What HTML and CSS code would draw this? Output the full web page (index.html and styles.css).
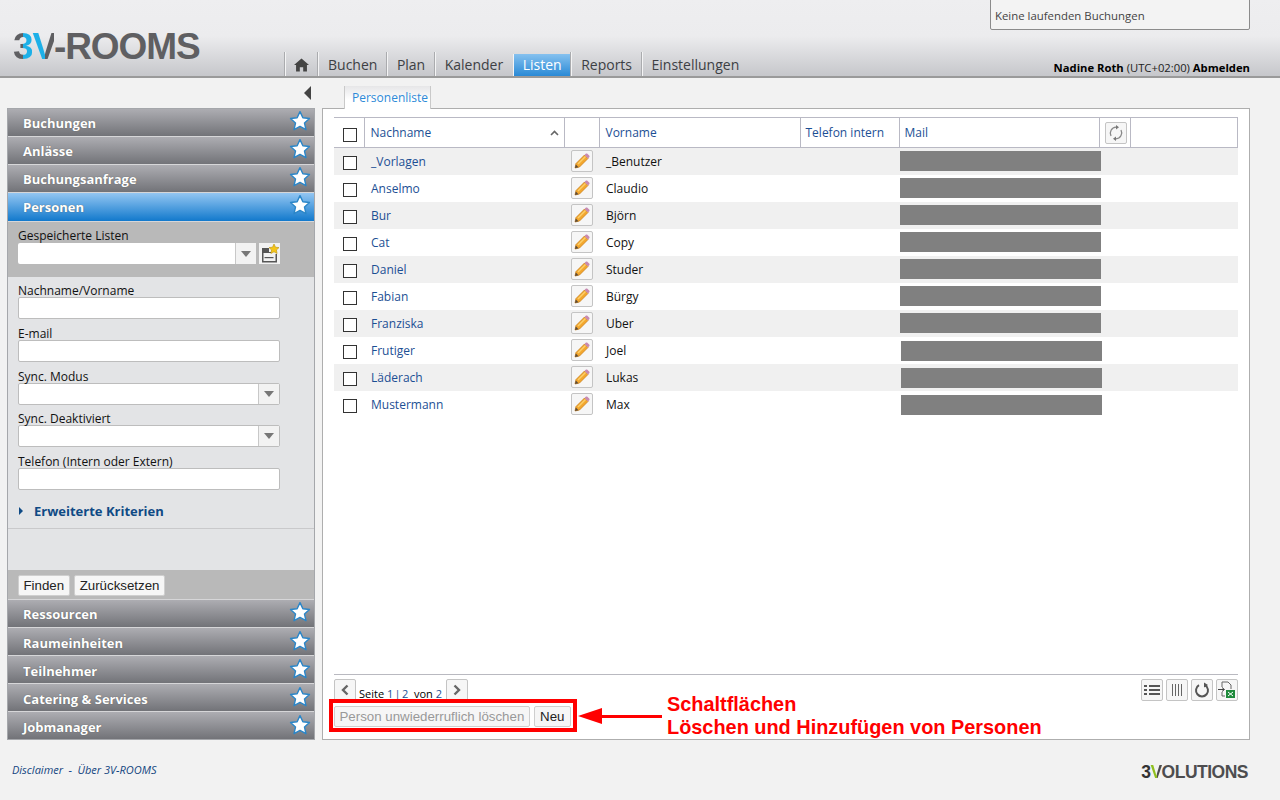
FILE: index.html
```html
<!DOCTYPE html>
<html lang="de">

<head>
    <meta charset="UTF-8">
    <title>3V-ROOMS Personenliste</title>
    <link rel="stylesheet" href="styles.css">
</head>

<body>
    <svg class="defs" width="0" height="0">
        <symbol id="star" viewBox="0 0 20 20">
            <path d="M10 1.500l2.600 5.600 6 .7-4.500 4.100 1.300 6L10 14.900l-5.400 3 1.300-6L1.400 7.800l6-.7z" fill="#fff" stroke="#2b86c8" stroke-width="1.300" stroke-linejoin="round"/>
        </symbol>
        <symbol id="pencil" viewBox="0 0 18 18">
            <path d="M3 11.500L11.500 3 15 6.500 6.500 15 2 16z" fill="#f3a72e" stroke="#c77a10" stroke-width=".7"/>
            <path d="M4.500 11.500L12 4l1 1-7.500 7.500z" fill="#fbcf6a"/>
            <path d="M11.500 3l1.200-1.200c.5-.5 1.200-.5 1.700 0l1.800 1.800c.5.5.5 1.200 0 1.700L15 6.500z" fill="#c88ab0"/>
            <path d="M2 16l.8-3.500 2.700 2.700z" fill="#5a4a3a"/>
        </symbol>
        <symbol id="caret" viewBox="0 0 10 6">
            <path d="M0 0h10L5 6z" fill="#777"/>
        </symbol>
    </svg>

    <!-- Header -->
    <header class="topbar">
        <div class="running-box">Keine laufenden Buchungen</div>
        <div class="logo"><span class="logo-3">3</span><span class="logo-v">V</span>-ROOMS</div>
        <nav class="nav">
            <a class="nav-home" href="#">
                <svg width="15" height="14" viewBox="0 0 16 14"><path d="M8 0L0 7h2.200v7h4v-4.500h3.600V14h4V7H16z" fill="#444"/></svg>
            </a>
            <a href="#">Buchen</a>
            <a href="#">Plan</a>
            <a href="#">Kalender</a>
            <a class="active" href="#">Listen</a>
            <a href="#">Reports</a>
            <a href="#">Einstellungen</a>
        </nav>
        <div class="user"><b>Nadine Roth</b> (UTC+02:00) <b>Abmelden</b></div>
    </header>

    <div class="main">
        <!-- Sidebar -->
        <aside class="side">
            <div class="collapse-row"><span class="collapse-arrow"></span></div>
            <div class="accordion">
                <div class="acc-head">Buchungen<svg class="star"><use href="#star"/></svg></div>
                <div class="acc-head">Anlässe<svg class="star"><use href="#star"/></svg></div>
                <div class="acc-head">Buchungsanfrage<svg class="star"><use href="#star"/></svg></div>
                <div class="acc-head acc-open">Personen<svg class="star"><use href="#star"/></svg></div>

                <div class="saved">
                    <label>Gespeicherte Listen</label>
                    <div class="saved-row">
                        <div class="combo combo-saved"><span class="combo-input"></span><span class="combo-btn"><svg width="10" height="6"><use href="#caret"/></svg></span></div>
                        <span class="save-btn">
                            <svg width="21" height="21" viewBox="0 0 21 21">
                                <path d="M3 5h7v4h2v1H3zM3 10h1.500v8H3zM16.500 11H18v8.500H3V18h13.500z" fill="#555"/>
                                <path d="M5.500 14h9v1.200h-9z" fill="#555"/>
                                <path d="M15 1l1.500 3.200 3.500.4-2.600 2.400.7 3.500L15 8.800l-3.100 1.700.7-3.500L10 4.600l3.500-.4z" fill="#f5c518" stroke="#b8900c" stroke-width=".6"/>
                            </svg>
                        </span>
                    </div>
                </div>

                <div class="filters">
                    <div class="field">
                        <label>Nachname/Vorname</label>
                        <input type="text">
                    </div>
                    <div class="field">
                        <label>E-mail</label>
                        <input type="text">
                    </div>
                    <div class="field">
                        <label>Sync. Modus</label>
                        <div class="combo"><span class="combo-input"></span><span class="combo-btn"><svg width="10" height="6"><use href="#caret"/></svg></span></div>
                    </div>
                    <div class="field">
                        <label>Sync. Deaktiviert</label>
                        <div class="combo"><span class="combo-input"></span><span class="combo-btn"><svg width="10" height="6"><use href="#caret"/></svg></span></div>
                    </div>
                    <div class="field">
                        <label>Telefon (Intern oder Extern)</label>
                        <input type="text">
                    </div>
                    <div class="more"><span class="more-arrow"></span>Erweiterte Kriterien</div>
                </div>
                <div class="filters-gap"></div>
                <div class="find-bar">
                    <button class="btn">Finden</button>
                    <button class="btn">Zurücksetzen</button>
                </div>

                <div class="acc-head">Ressourcen<svg class="star"><use href="#star"/></svg></div>
                <div class="acc-head">Raumeinheiten<svg class="star"><use href="#star"/></svg></div>
                <div class="acc-head">Teilnehmer<svg class="star"><use href="#star"/></svg></div>
                <div class="acc-head">Catering &amp; Services<svg class="star"><use href="#star"/></svg></div>
                <div class="acc-head">Jobmanager<svg class="star"><use href="#star"/></svg></div>
            </div>
        </aside>

        <!-- Content -->
        <section class="content">
            <div class="tabs"><span class="tab">Personenliste</span></div>
            <div class="panel">
                <div class="grid-area">
                    <table class="grid">
                        <colgroup>
                            <col class="c-check"><col class="c-name"><col class="c-edit"><col class="c-first"><col class="c-phone"><col class="c-mail"><col class="c-refresh"><col>
                        </colgroup>
                        <thead>
                            <tr>
                                <th><span class="check"></span></th>
                                <th><div class="th-sort">Nachname<svg width="9" height="6" viewBox="0 0 9 6"><path d="M1 5l3.500-3.500L8 5" fill="none" stroke="#666" stroke-width="1.600"/></svg></div></th>
                                <th></th>
                                <th>Vorname</th>
                                <th>Telefon intern</th>
                                <th>Mail</th>
                                <th>
                                    <span class="icon-btn">
                                        <svg width="16" height="16" viewBox="0 0 16 16"><path d="M3 11A6 6 0 0 1 8 2.200M13 5a6 6 0 0 1-5 8.800" fill="none" stroke="#888" stroke-width="1.300"/><path d="M8 0l3 2.200-3 2.200zM8 11.600l-3 2.200 3 2.200z" fill="#777"/></svg>
                                    </span>
                                </th>
                                <th></th>
                            </tr>
                        </thead>
                        <tbody>
                            <tr><td><span class="check"></span></td><td><a href="#">_Vorlagen</a></td><td><span class="icon-btn"><svg width="18" height="18"><use href="#pencil"/></svg></span></td><td>_Benutzer</td><td></td><td><span class="redacted"></span></td><td></td><td></td></tr>
                            <tr><td><span class="check"></span></td><td><a href="#">Anselmo</a></td><td><span class="icon-btn"><svg width="18" height="18"><use href="#pencil"/></svg></span></td><td>Claudio</td><td></td><td><span class="redacted"></span></td><td></td><td></td></tr>
                            <tr><td><span class="check"></span></td><td><a href="#">Bur</a></td><td><span class="icon-btn"><svg width="18" height="18"><use href="#pencil"/></svg></span></td><td>Björn</td><td></td><td><span class="redacted"></span></td><td></td><td></td></tr>
                            <tr><td><span class="check"></span></td><td><a href="#">Cat</a></td><td><span class="icon-btn"><svg width="18" height="18"><use href="#pencil"/></svg></span></td><td>Copy</td><td></td><td><span class="redacted"></span></td><td></td><td></td></tr>
                            <tr><td><span class="check"></span></td><td><a href="#">Daniel</a></td><td><span class="icon-btn"><svg width="18" height="18"><use href="#pencil"/></svg></span></td><td>Studer</td><td></td><td><span class="redacted"></span></td><td></td><td></td></tr>
                            <tr><td><span class="check"></span></td><td><a href="#">Fabian</a></td><td><span class="icon-btn"><svg width="18" height="18"><use href="#pencil"/></svg></span></td><td>Bürgy</td><td></td><td><span class="redacted"></span></td><td></td><td></td></tr>
                            <tr><td><span class="check"></span></td><td><a href="#">Franziska</a></td><td><span class="icon-btn"><svg width="18" height="18"><use href="#pencil"/></svg></span></td><td>Uber</td><td></td><td><span class="redacted"></span></td><td></td><td></td></tr>
                            <tr><td><span class="check"></span></td><td><a href="#">Frutiger</a></td><td><span class="icon-btn"><svg width="18" height="18"><use href="#pencil"/></svg></span></td><td>Joel</td><td></td><td><span class="redacted shifted"></span></td><td></td><td></td></tr>
                            <tr><td><span class="check"></span></td><td><a href="#">Läderach</a></td><td><span class="icon-btn"><svg width="18" height="18"><use href="#pencil"/></svg></span></td><td>Lukas</td><td></td><td><span class="redacted shifted"></span></td><td></td><td></td></tr>
                            <tr><td><span class="check"></span></td><td><a href="#">Mustermann</a></td><td><span class="icon-btn"><svg width="18" height="18"><use href="#pencil"/></svg></span></td><td>Max</td><td></td><td><span class="redacted shifted"></span></td><td></td><td></td></tr>
                        </tbody>
                    </table>
                </div>

                <div class="pager-row">
                    <div class="pager">
                        <span class="icon-btn"><svg width="10" height="12" viewBox="0 0 10 12"><path d="M7.500 1.500L3 6l4.500 4.500" fill="none" stroke="#666" stroke-width="2.400"/></svg></span>
                        <span class="pager-text">Seite <a class="pager-pages" href="#">1 | 2</a>&nbsp; von <a href="#">2</a></span>
                        <span class="icon-btn"><svg width="10" height="12" viewBox="0 0 10 12"><path d="M2.500 1.500L7 6l-4.500 4.500" fill="none" stroke="#666" stroke-width="2.400"/></svg></span>
                    </div>
                    <div class="tools">
                        <span class="icon-btn">
                            <svg width="16" height="12" viewBox="0 0 16 12"><path d="M0 1h3v2H0zM5 1h11v2H5zM0 5h3v2H0zM5 5h11v2H5zM0 9h3v2H0zM5 9h11v2H5z" fill="#555"/></svg>
                        </span>
                        <span class="icon-btn">
                            <svg width="12" height="12" viewBox="0 0 12 12"><path d="M1 0h1v12H1zM4 0h1v12H4zM7 0h1v12H7zM10 0h1v12h-1z" fill="#666"/></svg>
                        </span>
                        <span class="icon-btn">
                            <svg width="16" height="16" viewBox="0 0 16 16"><path d="M5 3.200a6 6 0 1 0 6 0" fill="none" stroke="#555" stroke-width="2"/><path d="M10 .5v5l4-2.500z" fill="#555"/></svg>
                        </span>
                        <span class="icon-btn">
                            <svg width="18" height="18" viewBox="0 0 18 18">
                                <path d="M4 6V1h6l3 3v4M4 11v4h3" fill="none" stroke="#666" stroke-width="1"/>
                                <path d="M0 8.500h6M4 6.500l2.500 2-2.500 2" fill="none" stroke="#444" stroke-width="1"/>
                                <rect x="8" y="9" width="9" height="8" fill="#1f8a3c"/>
                                <path d="M10 11l5 4M15 11l-5 4" stroke="#fff" stroke-width="1"/>
                            </svg>
                        </span>
                    </div>
                </div>
                <div class="actions">
                    <button class="btn btn-disabled">Person unwiederruflich löschen</button>
                    <button class="btn btn-new">Neu</button>
                </div>
            </div>

            <!-- Annotation over the page -->
            <div class="mark-box"></div>
            <div class="mark-arrow"><span class="mark-head"></span><span class="mark-line"></span></div>
            <div class="mark-text">Schaltflächen<br>Löschen und Hinzufügen von Personen</div>
        </section>
    </div>

    <footer class="foot">
        <div class="foot-links"><a href="#">Disclaimer</a><span class="foot-sep">-</span><a href="#">Über 3V-ROOMS</a></div>
        <div class="foot-logo"><span class="foot-3">3</span><span class="foot-v">V</span>OLUTIONS</div>
    </footer>
</body>

</html>
```

FILE: styles.css
```css
* {
    box-sizing: border-box;
}

html, body {
    height: 800px;
    overflow: hidden;
}

body {
    margin: 0;
    background-color: #f2f2f2;
    font-family: "Open Sans", "Noto Sans", sans-serif;
    font-size: 12px;
    color: #111;
}

a {
    color: #1c4f94;
    text-decoration: none;
}

.defs {
    position: absolute;
}

/* Header */
.topbar {
    height: 78px;
    display: flex;
    flex-direction: column;
    position: relative;
    background: linear-gradient(#eeeef0 0, #ececee 36px, #c5c6ca 77px);
    border-bottom: 2px solid #9a9a9a;
}

.running-box {
    position: absolute;
    left: 990px;
    top: -2px;
    width: 260px;
    height: 32px;
    padding: 8px 4px 0;
    background-color: #f3f3f3;
    border: 1px solid #8b8b8b;
    border-radius: 2px;
    color: #444;
    font-size: 11.400px;
    line-height: 18px;
}

.logo {
    position: absolute;
    left: 13px;
    top: 26px;
    font-family: "Liberation Sans", Arial, sans-serif;
    font-size: 37px;
    font-weight: bold;
    line-height: 42px;
    letter-spacing: -1.100px;
    color: #5f5f62;
}

.logo-3 {
    background: linear-gradient(90deg, #5f5f62 55%, #1db0e8 55%);
    -webkit-background-clip: text;
    background-clip: text;
    color: transparent;
}

.logo-v {
    background: linear-gradient(90deg, #1db0e8 60%, #5f5f62 60%);
    -webkit-background-clip: text;
    background-clip: text;
    color: transparent;
}

.nav {
    position: absolute;
    left: 285px;
    top: 52px;
    height: 24px;
    display: flex;
}

.nav a {
    height: 24px;
    padding: 0 8.500px 0 9px;
    border-left: 1px solid #f4f4f5;
    box-shadow: -1px 0 0 #aaabae;
    margin-left: 1px;
    color: #3d3f44;
    font-size: 14px;
    line-height: 25px;
}

.nav a.nav-home {
    width: 32px;
    display: flex;
    align-items: center;
    padding: 2px 0 0 8px;
    margin-left: 0;
}

.nav a.active {
    height: 22px;
    margin-top: 2px;
    line-height: 21px;
    color: #fff;
    background: linear-gradient(#85c1ef, #2a8ad6);
    box-shadow: none;
}

.user {
    position: absolute;
    right: 30px;
    top: 60px;
    font-size: 11.250px;
    line-height: 16px;
    color: #222;
}

.user b {
    color: #000;
}

/* Sidebar */
.main {
    height: 662px;
    display: flex;
    padding-left: 7px;
}

.side {
    width: 308px;
    flex-shrink: 0;
}

.collapse-row {
    height: 30px;
    display: flex;
    justify-content: flex-end;
    align-items: center;
    padding: 0 4px 0 0;
}

.collapse-arrow {
    width: 0;
    height: 0;
    border-top: 7px solid transparent;
    border-bottom: 7px solid transparent;
    border-right: 7px solid #444;
}

.accordion {
    width: 308px;
    border: 1px solid #a5a7ab;
    background-color: #e3e4e6;
}

.acc-head {
    height: 28px;
    display: flex;
    justify-content: space-between;
    align-items: center;
    padding: 0 3px 0 15px;
    background: linear-gradient(#adadb2, #727378);
    border-bottom: 1px solid #d6d6d8;
    color: #fff;
    font-size: 13px;
    font-weight: 700;
    text-shadow: 0 0 1px #555;
}

.find-bar ~ .acc-head {
    padding-top: 2px;
}

.find-bar + .acc-head {
    padding-top: 0;
}

.acc-head:last-child {
    height: 27px;
    border-bottom: none;
}

.acc-head.acc-open {
    height: 29px;
    background: linear-gradient(#93c6f2, #1279cc);
}

.star {
    width: 22px;
    height: 22px;
    margin-top: -4px;
}

.saved {
    height: 55px;
    padding: 6px 10px 0;
    background-color: #b9b9b9;
}

label {
    display: block;
    font-size: 12px;
    line-height: 15px;
    color: #111;
}

.saved-row {
    display: flex;
    gap: 3px;
}

.combo {
    width: 262px;
    height: 22px;
    display: flex;
    background-color: #fff;
    border: 1px solid #bdbdbd;
    border-radius: 2px;
}

.combo-saved {
    width: 238px;
    height: 21px;
    border: none;
}

.combo-input {
    flex: 1;
}

.combo-btn {
    width: 21px;
    display: flex;
    align-items: center;
    justify-content: center;
    background-color: #f2f2f2;
    border-left: 1px solid #c8c8c8;
}

.save-btn {
    width: 21px;
    height: 21px;
    background-color: #f2f2f2;
}

.filters {
    height: 252px;
    padding: 7px 10px 0;
    border-bottom: 1px solid #c9c9cb;
}

.field {
    height: 42.800px;
}

.field label {
    height: 13px;
    line-height: 14px;
}

.field input {
    display: block;
    width: 262px;
    height: 22px;
    padding: 0 4px;
    border: 1px solid #bdbdbd;
    border-radius: 2px;
    background-color: #fff;
}

.more {
    display: flex;
    align-items: center;
    margin-top: 4px;
    color: #0f4a85;
    font-size: 13px;
    font-weight: 700;
    line-height: 18px;
}

.more-arrow {
    width: 0;
    height: 0;
    margin: 0 11px 0 1px;
    border-top: 4px solid transparent;
    border-bottom: 4px solid transparent;
    border-left: 4px solid #0f4a85;
}

.filters-gap {
    height: 41px;
}

.find-bar {
    height: 30px;
    display: flex;
    gap: 4.500px;
    padding: 5px 10px 0;
    background-color: #b9b9b9;
    border-bottom: 1px solid #d6d6d8;
}

.btn {
    height: 21px;
    padding: 0 4.500px;
    background-color: #f6f6f6;
    border: 1px solid #cfcfcf;
    border-radius: 2px;
    color: #222;
    font-family: "Liberation Sans", Arial, sans-serif;
    font-size: 13.300px;
}

/* Content */
.content {
    position: relative;
    flex: 1;
    padding: 8px 30px 0 7px;
}

.tabs {
    height: 22px;
    padding-left: 22px;
}

.tab {
    display: block;
    width: 87px;
    height: 23px;
    position: relative;
    padding: 3px 0 0 7px;
    background: linear-gradient(#e6e6e8, #fff 60%);
    border-left: 1px solid #c9c9c9;
    border-right: 1px solid #c9c9c9;
    color: #2d8ad8;
    font-size: 12px;
    line-height: 17px;
}

.panel {
    height: 632px;
    display: flex;
    flex-direction: column;
    padding: 8px 11px 0;
    background-color: #fff;
    border: 1px solid #aeaeae;
}

.grid-area {
    height: 558px;
    flex-shrink: 0;
    border-bottom: 1px solid #b9b9c0;
}

.grid {
    width: 904px;
    table-layout: fixed;
    border-collapse: collapse;
}

.c-check { width: 30px; }
.c-name { width: 200px; }
.c-edit { width: 35px; }
.c-first { width: 201px; }
.c-phone { width: 99px; }
.c-mail { width: 200px; }
.c-refresh { width: 31px; }

.grid th {
    height: 30px;
    padding: 0 5px;
    border: 1px solid #b9b9c4;
    color: #1c4f94;
    font-size: 12px;
    font-weight: 400;
    text-align: left;
}

.grid th:first-child {
    border-left: none;
    padding-left: 9px;
    padding-top: 4px;
}

.grid th:nth-child(2),
.grid th:nth-child(4) {
    padding-left: 6px;
}

.th-sort {
    display: flex;
    justify-content: space-between;
    align-items: center;
}

.grid td {
    height: 27px;
    padding: 0 5px;
    font-size: 12px;
}

.grid tbody tr:nth-child(odd) {
    background-color: #f0f0f0;
}

.grid td:nth-child(1) {
    padding-left: 9px;
    padding-top: 3px;
}

.grid td:nth-child(2) {
    padding-left: 7px;
}

.grid td:nth-child(3) {
    padding: 0 0 0 7px;
}

.grid td:nth-child(4) {
    padding-left: 7px;
}

.grid td:nth-child(6) {
    padding: 0 0 0 1px;
}

.grid td a {
    color: #1c4f94;
}

.check {
    display: block;
    width: 14px;
    height: 14px;
    background-color: #fff;
    border: 1px solid #333;
}

.redacted {
    display: block;
    width: 201px;
    height: 20px;
    background-color: #808080;
}

.redacted.shifted {
    margin-left: 1px;
    position: relative;
    top: 1px;
}

.icon-btn {
    width: 22px;
    height: 22px;
    display: flex;
    align-items: center;
    justify-content: center;
    background-color: #f6f6f6;
    border: 1px solid #c4c4c4;
    border-radius: 2px;
}

.pager-row {
    display: flex;
    justify-content: space-between;
    flex-shrink: 0;
    padding-top: 4px;
    height: 30px;
}

.pager {
    display: flex;
    align-items: flex-start;
}

.pager-text {
    width: 90px;
    padding: 7px 0 0 3px;
    font-size: 11px;
    line-height: 16px;
    white-space: nowrap;
    color: #000;
}

.pager-pages {
    word-spacing: -1.500px;
}

.tools {
    display: flex;
    gap: 3px;
}

.actions {
    display: flex;
    gap: 4px;
    padding-top: 1px;
}

.btn-disabled {
    color: #999;
}

.btn-new {
    width: 37px;
    padding: 0;
}

/* Red annotation */
.mark-box {
    position: absolute;
    left: 14px;
    top: 621px;
    width: 248px;
    height: 33px;
    border: 4px solid #f00;
}

.mark-arrow {
    position: absolute;
    left: 263px;
    top: 630px;
    width: 84px;
    height: 16px;
    display: flex;
    align-items: center;
}

.mark-head {
    width: 0;
    height: 0;
    border-top: 8px solid transparent;
    border-bottom: 8px solid transparent;
    border-right: 24px solid #f00;
}

.mark-line {
    flex: 1;
    height: 3px;
    background-color: #f00;
}

.mark-text {
    position: absolute;
    left: 352px;
    top: 615px;
    color: #f00;
    font-family: "Liberation Sans", Arial, sans-serif;
    font-size: 19.900px;
    font-weight: bold;
    line-height: 23px;
    white-space: nowrap;
}

/* Footer */
.foot {
    height: 60px;
    display: flex;
    justify-content: space-between;
    padding: 22px 32px 0 12px;
}

.foot-links {
    font-size: 11px;
    font-style: italic;
    line-height: 16px;
    color: #1c4f94;
}

.foot-links a {
    color: #12457f;
}

.foot-sep {
    margin: 0 5.500px;
}

.foot-logo {
    font-family: "Liberation Sans", Arial, sans-serif;
    font-size: 17.500px;
    font-weight: bold;
    line-height: 20px;
    letter-spacing: -.5px;
    color: #4d4d4f;
}

.foot-3 {
    color: #333;
}

.foot-v {
    background: linear-gradient(90deg, #8fbf1f 55%, #4d4d4f 55%);
    -webkit-background-clip: text;
    background-clip: text;
    color: transparent;
}
```
